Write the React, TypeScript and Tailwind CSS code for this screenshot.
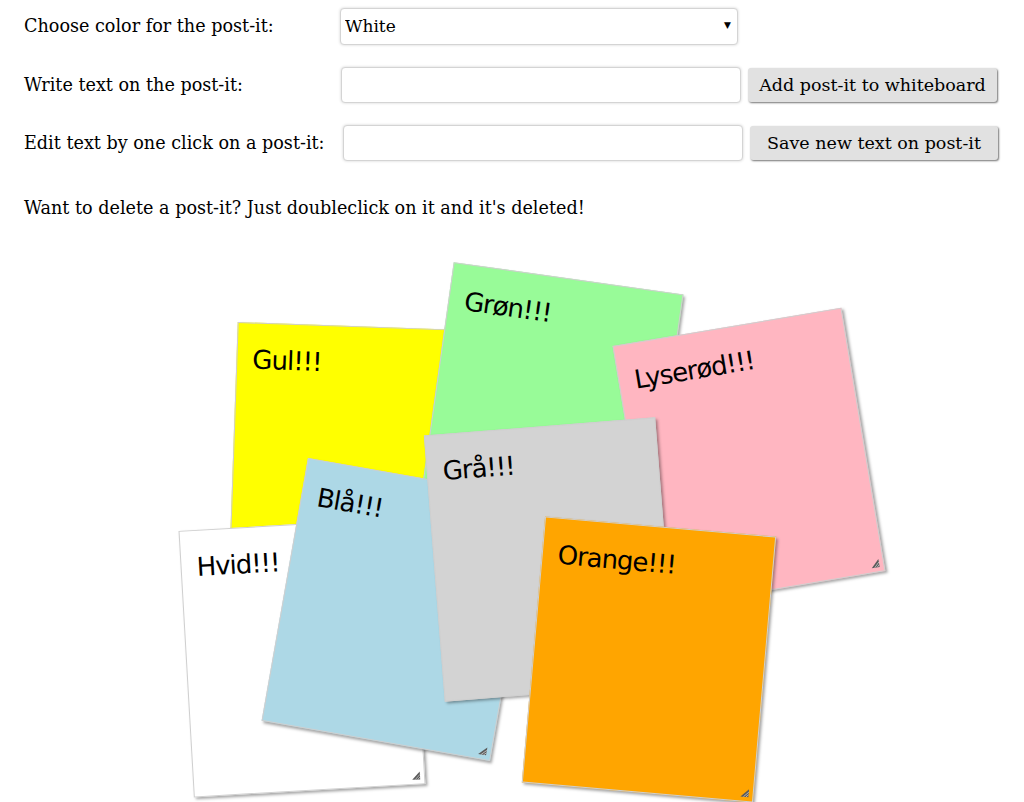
import { useState } from "react";

type Note = {
  id: number;
  text: string;
  color: string;
  left: number;
  top: number;
  angle: number;
};

const startNotes: Note[] = [
  { id: 1, text: "Gul!!!", color: "bg-[#ffff00]", left: 233, top: 86, angle: 2 },
  { id: 2, text: "Grøn!!!", color: "bg-[#98fb98]", left: 434, top: 37, angle: 8 },
  { id: 3, text: "Lyserød!!!", color: "bg-[#ffb6c1]", left: 633, top: 85, angle: -9.5 },
  { id: 4, text: "Hvid!!!", color: "bg-white", left: 186, top: 284, angle: -3.3 },
  { id: 5, text: "Blå!!!", color: "bg-[#add8e6]", left: 283, top: 236, angle: 10 },
  { id: 6, text: "Grå!!!", color: "bg-[#d3d3d3]", left: 434, top: 186, angle: -4.5 },
  { id: 7, text: "Orange!!!", color: "bg-[#ffa500]", left: 533, top: 286, angle: 5 },
];

const Grip = () => (
  <svg className="absolute right-[3px] bottom-[3px] size-[10px]" viewBox="0 0 10 10">
    <path d="M9 1 L9 9 L1 9 Z" fill="#5a5a5a" />
    <path d="M4 9 L9 4 M6.5 9 L9 6.5" stroke="#c8c8c8" strokeWidth="0.8" />
  </svg>
);

const PostIt = ({ note, onDelete }: { note: Note; onDelete: (id: number) => void }) => (
  <div
    onDoubleClick={() => onDelete(note.id)}
    className={`absolute h-[267px] w-[232px] border border-[#cfcfcf] shadow-[2px_2px_3px_rgba(0,0,0,0.35)] ${note.color}`}
    style={{ left: note.left, top: note.top, transform: `rotate(${note.angle}deg)` }}>
    <p className="pt-[21px] pl-[15px] font-['DejaVu_Sans',sans-serif] text-[26px] leading-[1.2] tracking-[-1px] text-black">
      {note.text}
    </p>
    <Grip />
  </div>
);

const inputCls =
  "h-[36px] w-[400px] rounded-[4px] border border-[#d4d4d4] bg-white px-2 shadow-[0_0_3px_rgba(0,0,0,0.18)] outline-none";
const btnCls =
  "h-[34px] rounded-[3px] bg-[#e1e1e1] px-2 text-[17.5px] text-black shadow-[1px_1px_2px_rgba(0,0,0,0.55)]";

export default function App() {
  const [notes, setNotes] = useState(startNotes);
  const [color, setColor] = useState("White");

  return (
    <div className="min-h-[802px] bg-white font-['DejaVu_Serif',serif] text-[17.6px] text-black">
      <div className="flex h-[240px] flex-col gap-[22px] pt-[8px] pl-[24px]">
        <div className="flex h-[37px] items-center">
          <label className="w-[316px]">Choose color for the post-it:</label>
          <div className="relative">
            <select
              value={color}
              onChange={(e) => setColor(e.target.value)}
              className="h-[37px] w-[398px] appearance-none rounded-[4px] border border-[#d4d4d4] bg-white pl-[4px] text-[17px] shadow-[0_0_3px_rgba(0,0,0,0.18)] outline-none">
              <option>White</option>
              <option>Yellow</option>
              <option>Green</option>
              <option>Pink</option>
              <option>Gray</option>
              <option>Blue</option>
              <option>Orange</option>
            </select>
            <span className="pointer-events-none absolute top-[11px] right-[7px] text-[9px]">▼</span>
          </div>
        </div>
        <div className="flex h-[36px] items-center">
          <label className="w-[317px]">Write text on the post-it:</label>
          <input className={inputCls} />
          <button type="button" className={`ml-[7px] w-[249px] ${btnCls}`}>
            Add post-it to whiteboard
          </button>
        </div>
        <div className="flex h-[36px] items-center">
          <label className="w-[319px]">Edit text by one click on a post-it:</label>
          <input className={inputCls} />
          <button type="button" className={`ml-[7px] w-[248px] ${btnCls}`}>
            Save new text on post-it
          </button>
        </div>
        <p className="mt-[13px] leading-[24px]">Want to delete a post-it? Just doubleclick on it and it's deleted!</p>
      </div>
      <div className="relative h-[562px] overflow-hidden">
        {notes.map((n) => (
          <PostIt key={n.id} note={n} onDelete={(id) => setNotes(notes.filter((x) => x.id !== id))} />
        ))}
      </div>
    </div>
  );
}
